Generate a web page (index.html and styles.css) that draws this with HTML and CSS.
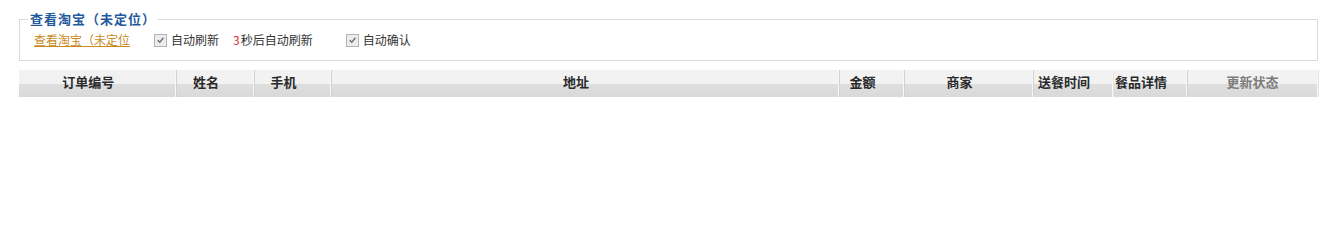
FILE: index.html
```html
<!DOCTYPE html>
<html lang="zh">
<head>
<meta charset="utf-8">
<title>查看淘宝</title>
<link rel="stylesheet" href="styles.css">
</head>
<body>
<div class="wrap">
  <fieldset class="panel">
    <legend class="panel-title">查看淘宝（未定位）</legend>
    <div class="toolbar">
      <a class="loc-link" href="#">查看淘宝（未定位</a>
      <label class="opt opt-refresh"><span class="cb"><svg viewBox="0 0 12 12" width="12" height="12"><path d="M3 6.2 L5.2 8.4 L9.2 3.6" fill="none" stroke="#6f6f6f" stroke-width="1.6"/></svg></span>自动刷新</label>
      <span class="countdown"><span class="num">3</span>秒后自动刷新</span>
      <label class="opt opt-confirm"><span class="cb"><svg viewBox="0 0 12 12" width="12" height="12"><path d="M3 6.2 L5.2 8.4 L9.2 3.6" fill="none" stroke="#6f6f6f" stroke-width="1.6"/></svg></span>自动确认</label>
    </div>
  </fieldset>

  <table class="grid">
    <colgroup>
      <col class="c1"><col class="c2"><col class="c3"><col class="c4"><col class="c5"><col class="c6"><col class="c7"><col class="c8"><col class="c9">
    </colgroup>
    <thead>
      <tr>
        <th>订单编号</th>
        <th>姓名</th>
        <th>手机</th>
        <th>地址</th>
        <th>金额</th>
        <th>商家</th>
        <th class="no-sep">送餐时间</th>
        <th>餐品详情</th>
        <th class="muted">更新状态</th>
      </tr>
    </thead>
  </table>
</div>
</body>
</html>
```

FILE: styles.css
```css
html, body {
  margin: 0;
  padding: 0;
  background: #ffffff;
}

body {
  font-family: "Noto Sans CJK SC", "Liberation Sans", sans-serif;
  font-size: 12px;
  color: #333333;
}

.wrap {
  width: 1299px;
  padding: 12px 0 0 19px;
}

.panel {
  margin: 0;
  padding: 5px 0 11px 8px;
  border: 1px solid #dadada;
  min-width: 0;
}

.panel-title {
  padding: 0 2px;
  font-size: 13px;
  line-height: 14px;
  font-weight: bold;
  letter-spacing: 1px;
  color: #1f5a9c;
}

.toolbar {
  display: flex;
  align-items: center;
  height: 18px;
  padding-left: 6px;
  line-height: 18px;
  white-space: nowrap;
}

.loc-link {
  color: #c98a24;
  text-decoration: underline;
  margin-right: 24px;
}

.opt {
  display: flex;
  align-items: center;
  color: #333333;
}

.cb {
  display: inline-flex;
  width: 11px;
  height: 11px;
  border: 1px solid #b4b4b4;
  background: #ececec;
  margin-right: 4px;
  align-items: center;
  justify-content: center;
}

.cb svg {
  display: block;
}

.opt-refresh {
  margin-right: 14px;
}

.countdown {
  margin-right: 33px;
  color: #333333;
}

.num {
  color: #e0262a;
  margin-right: 1px;
}

.grid {
  margin-top: 9px;
  width: 1299px;
  border-collapse: collapse;
  table-layout: fixed;
}

.c1 { width: 157px; }
.c2 { width: 78px; }
.c3 { width: 77px; }
.c4 { width: 508px; }
.c5 { width: 65px; }
.c6 { width: 129px; }
.c7 { width: 80px; }
.c8 { width: 74px; }
.c9 { width: 131px; }

.grid th {
  height: 24px;
  padding: 0 18px 3px 0;
  font-size: 13px;
  line-height: 16px;
  font-weight: bold;
  color: #2a2a2a;
  text-align: center;
  white-space: nowrap;
  overflow: hidden;
  background:
    linear-gradient(to bottom, rgba(255,255,255,0) 0, rgba(255,255,255,0) 14px, #dedede 14px, #d9d9d9 100%),
    repeating-conic-gradient(#ededed 0 25%, #f6f6f6 0 50%) 0 0 / 2px 2px;
  border-right: 1px solid #d2d2d2;
  box-shadow: inset -1px 0 0 #f7f7f7;
}

.grid th.no-sep {
  border-right-color: #e4e4e4;
}

.grid th.muted {
  color: #7c7c7c;
  padding-right: 0;
  border-right: 1px solid #e2e2e2;
}
```
